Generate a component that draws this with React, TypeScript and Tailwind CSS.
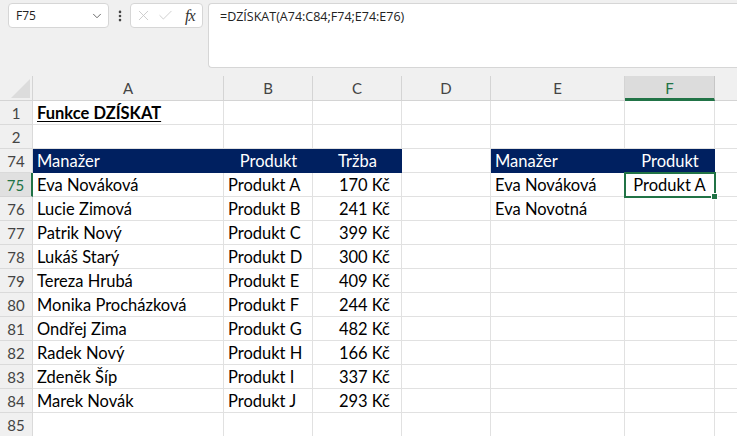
import React from 'react';
import { ChevronDown, EllipsisVertical, X, Check } from 'lucide-react';

const cols = ['A', 'B', 'C', 'D', 'E', 'F'];

type Row = {
  n: string;
  a?: string;
  b?: string;
  c?: string;
  e?: string;
  f?: string;
  bold?: boolean;
  head?: boolean;
};

const rows: Row[] = [
  { n: '1', a: 'Funkce DZÍSKAT', bold: true },
  { n: '2' },
  { n: '74', a: 'Manažer', b: 'Produkt', c: 'Tržba', e: 'Manažer', f: 'Produkt', head: true },
  { n: '75', a: 'Eva Nováková', b: 'Produkt A', c: '170 Kč', e: 'Eva Nováková', f: 'Produkt A' },
  { n: '76', a: 'Lucie Zimová', b: 'Produkt B', c: '241 Kč', e: 'Eva Novotná' },
  { n: '77', a: 'Patrik Nový', b: 'Produkt C', c: '399 Kč' },
  { n: '78', a: 'Lukáš Starý', b: 'Produkt D', c: '300 Kč' },
  { n: '79', a: 'Tereza Hrubá', b: 'Produkt E', c: '409 Kč' },
  { n: '80', a: 'Monika Procházková', b: 'Produkt F', c: '244 Kč' },
  { n: '81', a: 'Ondřej Zima', b: 'Produkt G', c: '482 Kč' },
  { n: '82', a: 'Radek Nový', b: 'Produkt H', c: '166 Kč' },
  { n: '83', a: 'Zdeněk Šíp', b: 'Produkt I', c: '337 Kč' },
  { n: '84', a: 'Marek Novák', b: 'Produkt J', c: '293 Kč' },
  { n: '85' },
];

const cell = 'h-6 border-r border-b border-[#e1e1e1] px-[4px] leading-[25px] whitespace-nowrap overflow-visible';
const dark = 'h-6 border-b border-[#002060] bg-[#002060] px-[4px] leading-[25px] text-white whitespace-nowrap';
const rowHead = 'h-6 bg-[#f0f0f0] border-r border-b border-[#dadada] text-center leading-[25px] text-[15px] text-[#444]';

export default function App() {
  return (
    <div className="w-[737px] h-[436px] overflow-hidden bg-white font-['Lato',sans-serif] text-[16.5px] text-black">
      {/* formula bar */}
      <div className="h-[76px] bg-[#f0f0f0] flex items-start pl-2 pt-[3px] font-['Open_Sans',sans-serif]">
        <div className="w-[101px] h-[25px] bg-white border border-[#d6d6d6] rounded-[4px] flex items-center justify-between pl-[7px] pr-[4px] text-[12px] text-[#222]">
          <span>F75</span>
          <ChevronDown size={14} strokeWidth={1.5} className="text-[#555]" />
        </div>
        <div className="w-[21px] h-[25px] flex items-center justify-center text-[#444]">
          <EllipsisVertical size={14} strokeWidth={2.5} />
        </div>
        <div className="w-[73px] h-[25px] bg-white border border-[#d6d6d6] rounded-[4px] flex items-center gap-[5px] pl-[4px] text-[#c6c6c6]">
          <X size={17} strokeWidth={1.2} />
          <Check size={17} strokeWidth={1.2} />
          <span className="ml-[6px] font-['Liberation_Serif',serif] italic text-[16px] text-[#333] tracking-[-1px]">fx</span>
        </div>
        <div className="ml-[5px] flex-1 h-[65px] bg-white border border-[#d6d6d6] rounded-l-[4px] border-r-0 pl-[11px] pt-[4px] text-[12.5px] text-[#222]">
          =DZÍSKAT(A74:C84;F74;E74:E76)
        </div>
      </div>

      {/* sheet grid */}
      <div className="grid grid-cols-[33px_191px_89px_89px_89px_134px_90px_1fr]">
        {/* column headers */}
        <div className="h-[25px] bg-[#f0f0f0] border-r border-b border-[#d4d4d4] flex items-end justify-end p-[2px]">
          <div className="w-0 h-0 border-l-[19px] border-l-transparent border-b-[19px] border-b-[#dcdcdc]" />
        </div>
        {cols.map((c) => (
          <div
            key={c}
            className={
              c === 'F'
                ? 'h-[25px] bg-[#dcdcdc] border-r border-[#c6c6c6] border-b-[3px] border-b-[#217346] text-center leading-[24px] text-[15px] text-[#217346]'
                : 'h-[25px] bg-[#f0f0f0] border-r border-b border-[#d4d4d4] text-center leading-[25px] text-[15px] text-[#444]'
            }
          >
            {c}
          </div>
        ))}
        <div className="h-[25px] bg-[#f0f0f0] border-b border-[#d4d4d4]" />

        {rows.map((r) => {
          const sel = r.n === '75';
          return (
            <React.Fragment key={r.n}>
              <div
                className={
                  sel
                    ? 'h-6 bg-[#e0e0e0] border-r-2 border-r-[#217346] border-b border-[#d4d4d4] text-center leading-[25px] text-[15px] text-[#217346]'
                    : rowHead
                }
              >
                {r.n}
              </div>
              {r.head ? (
                <>
                  <div className={dark}>{r.a}</div>
                  <div className={dark + ' text-center'}>{r.b}</div>
                  <div className={dark + ' text-center'}>{r.c}</div>
                  <div className={cell} />
                  <div className={dark}>{r.e}</div>
                  <div className={dark + ' text-center'}>{r.f}</div>
                </>
              ) : (
                <>
                  <div className={cell}>
                    {r.bold ? <span className="font-bold underline underline-offset-2">{r.a}</span> : r.a}
                  </div>
                  <div className={cell}>{r.b}</div>
                  <div className={cell + ' text-right pr-[11px]'}>{r.c}</div>
                  <div className={cell} />
                  <div className={cell}>{r.e}</div>
                  <div className={cell + ' text-center relative'}>
                    {r.f}
                    {sel && (
                      <div className="absolute z-10 -left-[1px] -top-[1px] w-[92px] h-[26px] border-2 border-[#217346] pointer-events-none">
                        <div className="absolute -right-[4px] -bottom-[4px] w-[7px] h-[7px] bg-[#217346] border border-white" />
                      </div>
                    )}
                  </div>
                </>
              )}
              <div className="h-6 border-b border-[#e1e1e1]" />
            </React.Fragment>
          );
        })}
      </div>
    </div>
  );
}
